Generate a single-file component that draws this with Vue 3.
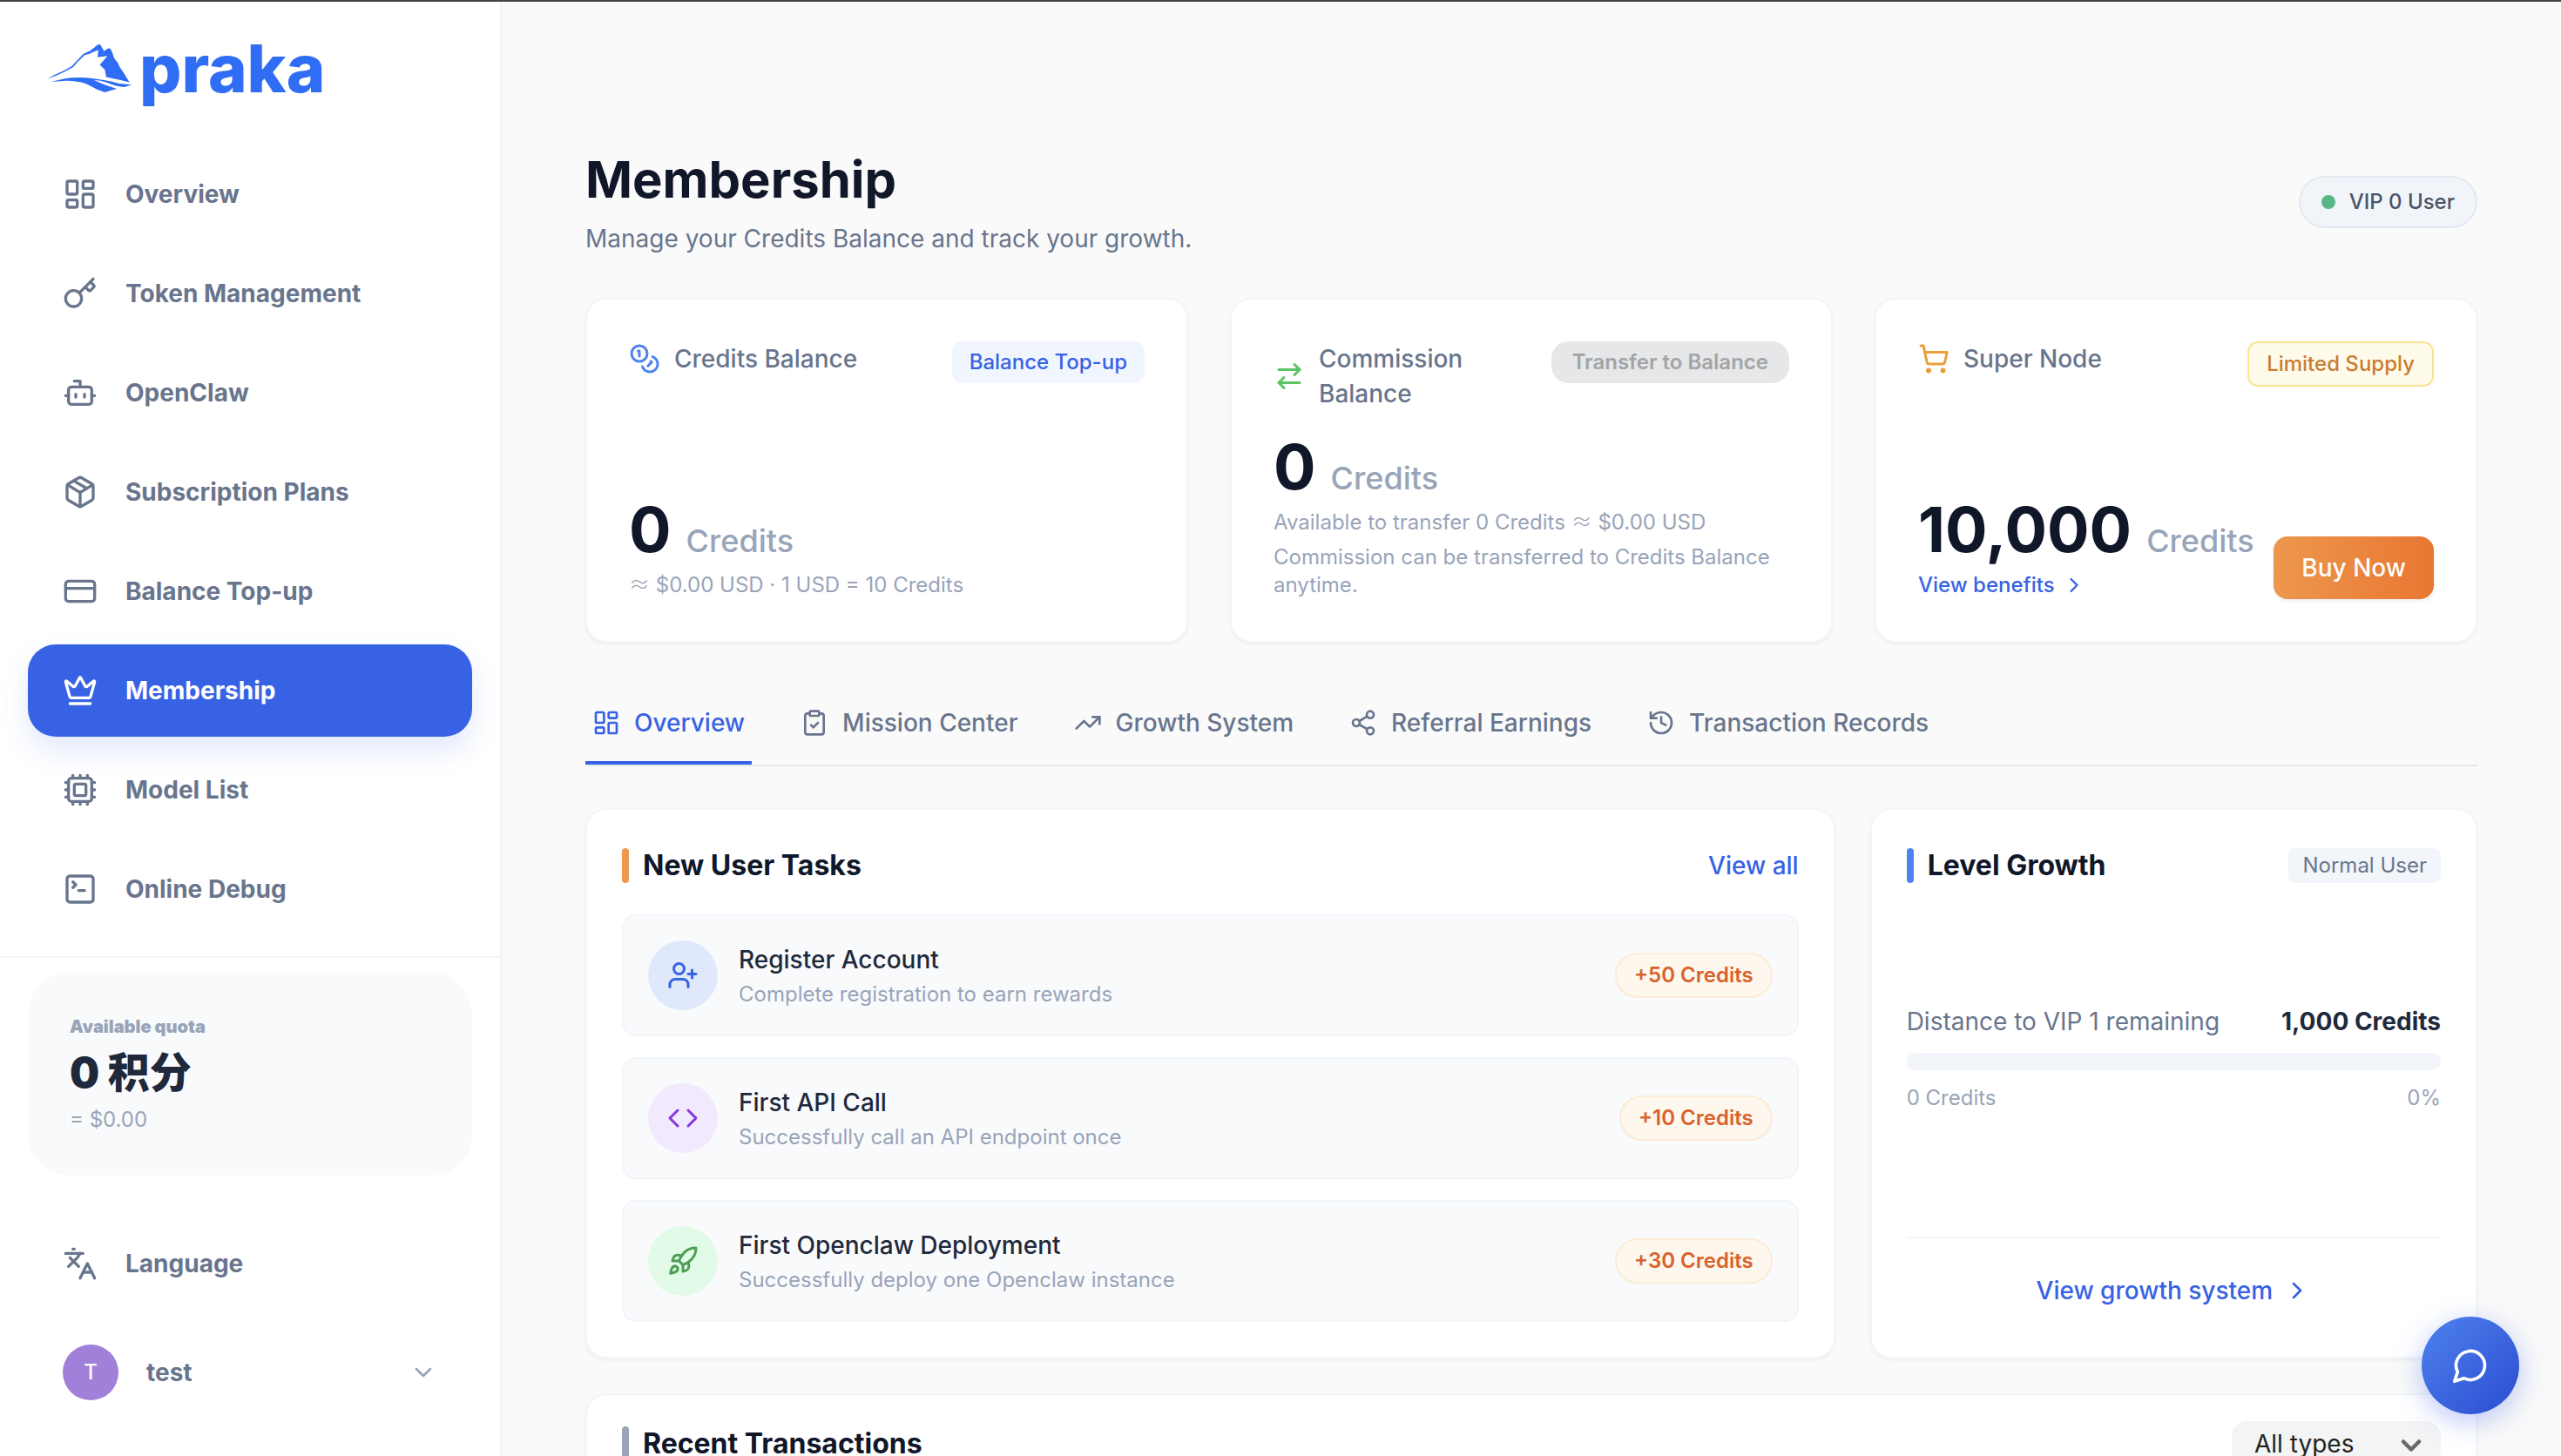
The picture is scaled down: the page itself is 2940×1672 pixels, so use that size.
<template>
  <div class="layout">
    <aside class="sidebar">
      <a class="logo" href="#">
        <svg class="logo-mark" viewBox="45 30 290 170" aria-hidden="true">
          <path
            d="M46 153 L70 139 L100 125 L128 110 L140 97 L168 68 L190 57 L205 46 Q218 34 223 34 Q229 36 232 47 L239 58 L250 50 Q256 46 262 52 L267 64 L273 82 L285 97 L292 112 L308 136 L325 164 L285 154 L246 146 L241 120 L224 105 L238 88 L250 74 L217 79 L219 54 L200 62 L190 67 L173 71 L160 84 L148 96 L134 112 L104 128 L75 142 Z"
          />
          <path
            d="M58 162 L105 151 Q150 144 205 151 Q255 158 290 168 L333 172 L308 180 Q280 178 250 165 Q225 157 203 156 L240 172 L282 186 L241 198 L215 188 L180 170 Q150 159 110 159 Z"
          />
        </svg>
        <span class="logo-text">praka</span>
      </a>

      <nav class="nav">
        <a
          v-for="item in navItems"
          :key="item.label"
          href="#"
          class="nav-item"
          :class="{ active: item.label === 'Membership' }"
        >
          <Icon :name="item.icon" class="icon-40" />
          {{ item.label }}
        </a>
      </nav>

      <div class="sidebar-footer">
        <div class="quota">
          <p class="quota-label">Available quota</p>
          <p class="quota-value">0 积分</p>
          <p class="quota-usd">= $0.00</p>
        </div>
        <button class="nav-item language">
          <Icon name="languages" class="icon-40" />
          Language
        </button>
        <button class="user">
          <span class="avatar">T</span>
          <span class="user-name">test</span>
          <Icon name="chevronDown" class="icon-32" />
        </button>
      </div>
    </aside>

    <main class="main">
      <header class="page-header">
        <div>
          <h1>Membership</h1>
          <p class="subtitle">Manage your Credits Balance and track your growth.</p>
        </div>
        <span class="vip-pill"><i class="dot"></i>VIP 0 User</span>
      </header>

      <section class="balance-cards">
        <article class="card balance-card">
          <div class="balance-head">
            <h2 class="balance-title">
              <Icon name="coins" class="icon-36 blue" />
              Credits Balance
            </h2>
            <button class="tag-button top-up">Balance Top-up</button>
          </div>
          <div>
            <p class="amount">0 <span class="unit">Credits</span></p>
            <p class="note"><span class="approx">≈</span> $0.00 USD · 1 USD = 10 Credits</p>
          </div>
        </article>

        <article class="card balance-card">
          <div class="balance-head">
            <h2 class="balance-title">
              <Icon name="transfer" class="icon-36 green" />
              Commission Balance
            </h2>
            <button class="tag-button transfer" disabled>Transfer to Balance</button>
          </div>
          <div>
            <p class="amount">0 <span class="unit">Credits</span></p>
            <p class="note">Available to transfer 0 Credits <span class="approx">≈</span> $0.00 USD</p>
            <p class="note note-extra">Commission can be transferred to Credits Balance anytime.</p>
          </div>
        </article>

        <article class="card balance-card">
          <div class="balance-head">
            <h2 class="balance-title">
              <Icon name="cart" class="icon-36 amber" />
              Super Node
            </h2>
            <span class="tag-button limited">Limited Supply</span>
          </div>
          <div class="node-bottom">
            <div>
              <p class="amount">10,000 <span class="unit">Credits</span></p>
              <a href="#" class="benefits">View benefits <Icon name="chevronRight" class="icon-28" /></a>
            </div>
            <button class="buy-button">Buy Now</button>
          </div>
        </article>
      </section>

      <div class="tabs" role="tablist">
        <button
          v-for="tab in tabs"
          :key="tab.label"
          class="tab"
          role="tab"
          :class="{ active: tab.label === activeTab }"
          :aria-selected="tab.label === activeTab"
          @click="activeTab = tab.label"
        >
          <Icon :name="tab.icon" class="icon-32" />
          {{ tab.label }}
        </button>
      </div>

      <section class="panels">
        <article class="card panel tasks-panel">
          <div class="panel-head">
            <h3 class="panel-title orange-bar">New User Tasks</h3>
            <a href="#" class="link">View all</a>
          </div>
          <ul class="tasks">
            <li v-for="task in tasks" :key="task.title" class="task">
              <span class="task-icon" :class="task.color"><Icon :name="task.icon" class="icon-36" /></span>
              <div class="task-text">
                <p class="task-title">{{ task.title }}</p>
                <p class="note">{{ task.desc }}</p>
              </div>
              <span class="reward">+{{ task.credits }} Credits</span>
            </li>
          </ul>
        </article>

        <article class="card panel growth-panel">
          <div class="panel-head">
            <h3 class="panel-title blue-bar">Level Growth</h3>
            <span class="level-badge">Normal User</span>
          </div>
          <div class="growth-body">
            <div class="row growth-row">
              <span>Distance to VIP 1 remaining</span>
              <strong>1,000 Credits</strong>
            </div>
            <div class="progress"><div class="progress-fill" :style="{ width: progress + '%' }"></div></div>
            <div class="row note">
              <span>0 Credits</span>
              <span>{{ progress }}%</span>
            </div>
          </div>
          <div class="growth-footer">
            <a href="#" class="link growth-link">View growth system <Icon name="chevronRight" class="icon-32" /></a>
          </div>
        </article>
      </section>

      <section class="card panel transactions">
        <div class="panel-head">
          <h3 class="panel-title slate-bar">Recent Transactions</h3>
          <div class="select-wrap">
            <select aria-label="Transaction type">
              <option>All types</option>
            </select>
            <Icon name="chevronDown" class="select-arrow" />
          </div>
        </div>
      </section>
    </main>

    <button class="chat-button" aria-label="Chat"><Icon name="message" class="icon-44" /></button>
  </div>
</template>

<script setup>
import { h, ref } from 'vue'

const icons = {
  dashboard:
    '<rect width="7" height="9" x="3" y="3" rx="1"/><rect width="7" height="5" x="14" y="3" rx="1"/><rect width="7" height="9" x="14" y="12" rx="1"/><rect width="7" height="5" x="3" y="16" rx="1"/>',
  key: '<path d="m15.5 7.5 2.3 2.3a1 1 0 0 0 1.4 0l2.1-2.1a1 1 0 0 0 0-1.4L19 4"/><path d="m21 2-9.6 9.6"/><circle cx="7.5" cy="15.5" r="5.5"/>',
  bot: '<path d="M12 8V4H8"/><rect width="16" height="12" x="4" y="8" rx="2"/><path d="M2 14h2M20 14h2M15 13v2M9 13v2"/>',
  box: '<path d="M11 21.73a2 2 0 0 0 2 0l7-4A2 2 0 0 0 21 16V8a2 2 0 0 0-1-1.73l-7-4a2 2 0 0 0-2 0l-7 4A2 2 0 0 0 3 8v8a2 2 0 0 0 1 1.73z"/><path d="M12 22V12"/><path d="m3.3 7 7.703 4.734a2 2 0 0 0 1.994 0L20.7 7"/><path d="m7.5 4.27 9 5.15"/>',
  creditCard: '<rect width="20" height="14" x="2" y="5" rx="2"/><path d="M2 10h20"/>',
  crown:
    '<path d="M11.562 3.266a.5.5 0 0 1 .876 0L15.39 8.87a1 1 0 0 0 1.516.294L21.183 5.5a.5.5 0 0 1 .798.519l-2.834 10.246a1 1 0 0 1-.956.734H5.81a1 1 0 0 1-.957-.734L2.02 6.02a.5.5 0 0 1 .798-.519l4.276 3.664a1 1 0 0 0 1.516-.294z"/><path d="M5 21h14"/>',
  cpu: '<path d="M12 20v2M12 2v2M17 20v2M17 2v2M7 20v2M7 2v2M2 12h2M2 17h2M2 7h2M20 12h2M20 17h2M20 7h2"/><rect width="16" height="16" x="4" y="4" rx="2"/><rect width="8" height="8" x="8" y="8" rx="1"/>',
  terminal: '<path d="m7 11 2-2-2-2"/><path d="M11 13h4"/><rect width="18" height="18" x="3" y="3" rx="2"/>',
  languages: '<path d="m5 8 6 6"/><path d="m4 14 6-6 2-3"/><path d="M2 5h12"/><path d="M7 2h1"/><path d="m22 22-5-10-5 10"/><path d="M14 18h6"/>',
  chevronDown: '<path d="m6 9 6 6 6-6"/>',
  chevronRight: '<path d="m9 18 6-6-6-6"/>',
  coins:
    '<circle cx="8" cy="8" r="6"/><path d="M18.09 10.37A6 6 0 1 1 10.34 18"/><path d="M7 6h1v4"/><path d="m16.71 13.88.7.71-2.82 2.82"/>',
  transfer: '<path d="m16 3 4 4-4 4"/><path d="M20 7H4"/><path d="m8 21-4-4 4-4"/><path d="M4 17h16"/>',
  cart: '<circle cx="8" cy="21" r="1"/><circle cx="19" cy="21" r="1"/><path d="M2.05 2.05h2l2.66 12.42a2 2 0 0 0 2 1.58h9.78a2 2 0 0 0 1.95-1.57l1.65-7.43H5.12"/>',
  clipboard:
    '<rect width="8" height="4" x="8" y="2" rx="1"/><path d="M16 4h2a2 2 0 0 1 2 2v14a2 2 0 0 1-2 2H6a2 2 0 0 1-2-2V6a2 2 0 0 1 2-2h2"/><path d="m9 14 2 2 4-4"/>',
  trending: '<path d="M16 7h6v6"/><path d="m22 7-8.5 8.5-5-5L2 17"/>',
  share:
    '<circle cx="18" cy="5" r="3"/><circle cx="6" cy="12" r="3"/><circle cx="18" cy="19" r="3"/><path d="m8.59 13.51 6.83 3.98M15.41 6.51l-6.82 3.98"/>',
  history: '<path d="M3 12a9 9 0 1 0 9-9 9.75 9.75 0 0 0-6.74 2.74L3 8"/><path d="M3 3v5h5"/><path d="M12 7v5l4 2"/>',
  userPlus: '<path d="M16 21v-2a4 4 0 0 0-4-4H6a4 4 0 0 0-4 4v2"/><circle cx="9" cy="7" r="4"/><path d="M19 8v6M22 11h-6"/>',
  code: '<path d="m16 18 6-6-6-6"/><path d="m8 6-6 6 6 6"/>',
  rocket:
    '<path d="M4.5 16.5c-1.5 1.26-2 5-2 5s3.74-.5 5-2c.71-.84.7-2.13-.09-2.91a2.18 2.18 0 0 0-2.91-.09z"/><path d="m12 15-3-3a22 22 0 0 1 2-3.95A12.88 12.88 0 0 1 22 2c0 2.72-.78 7.5-6 11a22.35 22.35 0 0 1-4 2z"/><path d="M9 12H4s.55-3.03 2-4c1.62-1.08 5 0 5 0"/><path d="M12 15v5s3.03-.55 4-2c1.08-1.62 0-5 0-5"/>',
  message: '<path d="M7.9 20A9 9 0 1 0 4 16.1L2 22Z"/>',
}

const Icon = (props) =>
  h('svg', {
    viewBox: '0 0 24 24',
    fill: 'none',
    stroke: 'currentColor',
    'stroke-width': 2,
    'stroke-linecap': 'round',
    'stroke-linejoin': 'round',
    'aria-hidden': 'true',
    innerHTML: icons[props.name],
  })
Icon.props = ['name']

const navItems = [
  { label: 'Overview', icon: 'dashboard' },
  { label: 'Token Management', icon: 'key' },
  { label: 'OpenClaw', icon: 'bot' },
  { label: 'Subscription Plans', icon: 'box' },
  { label: 'Balance Top-up', icon: 'creditCard' },
  { label: 'Membership', icon: 'crown' },
  { label: 'Model List', icon: 'cpu' },
  { label: 'Online Debug', icon: 'terminal' },
]

const tabs = [
  { label: 'Overview', icon: 'dashboard' },
  { label: 'Mission Center', icon: 'clipboard' },
  { label: 'Growth System', icon: 'trending' },
  { label: 'Referral Earnings', icon: 'share' },
  { label: 'Transaction Records', icon: 'history' },
]
const activeTab = ref('Overview')

const tasks = [
  {
    title: 'Register Account',
    desc: 'Complete registration to earn rewards',
    credits: 50,
    icon: 'userPlus',
    color: 'task-blue',
  },
  {
    title: 'First API Call',
    desc: 'Successfully call an API endpoint once',
    credits: 10,
    icon: 'code',
    color: 'task-purple',
  },
  {
    title: 'First Openclaw Deployment',
    desc: 'Successfully deploy one Openclaw instance',
    credits: 30,
    icon: 'rocket',
    color: 'task-green',
  },
]

const progress = ref(0)
</script>

<style>
body {
  margin: 0;
  background: #fafafa;
}
</style>

<style scoped>
.layout {
  display: flex;
  height: 100vh;
  box-sizing: border-box;
  border-top: 2px solid #444;
  overflow: hidden;
  background: #fafafa;
  color: #101729;
  font-family: Inter, 'Noto Sans CJK SC', sans-serif;
  font-size: 28px;
  line-height: 40px;
}

.layout *,
.layout *::before {
  box-sizing: border-box;
}

h1,
h2,
h3,
p,
ul {
  margin: 0;
  padding: 0;
}

a {
  color: inherit;
  text-decoration: none;
}

button {
  margin: 0;
  border: none;
  background: none;
  font: inherit;
  color: inherit;
  cursor: pointer;
}

svg {
  display: block;
  flex-shrink: 0;
}

.icon-28 {
  width: 28px;
  height: 28px;
}

.icon-32 {
  width: 32px;
  height: 32px;
}

.icon-36 {
  width: 36px;
  height: 36px;
}

.icon-40 {
  width: 40px;
  height: 40px;
}

.icon-44 {
  width: 44px;
  height: 44px;
}

.sidebar {
  display: flex;
  flex-direction: column;
  flex-shrink: 0;
  width: 576px;
  border-right: 2px solid #f2f4f8;
  background: #fff;
  box-shadow: 2px 0 6px rgba(15, 23, 42, 0.02);
}

.logo {
  display: flex;
  align-items: center;
  gap: 8px;
  height: 168px;
  padding: 0 54px 16px;
  color: #2f6df4;
}

.logo-mark {
  width: 98px;
  height: 58px;
  fill: currentColor;
}

.logo-text {
  font-size: 76px;
  font-weight: 800;
  line-height: 80px;
}

.nav {
  display: flex;
  flex: 1;
  flex-direction: column;
  gap: 8px;
  padding: 0 32px;
}

.nav-item {
  display: flex;
  align-items: center;
  gap: 32px;
  width: 100%;
  height: 106px;
  padding: 0 40px;
  border-radius: 32px;
  color: #68758d;
  font-weight: 700;
}

.nav-item.active {
  background: #3862e4;
  color: #fff;
  box-shadow: 0 16px 32px rgba(56, 98, 228, 0.14);
}

.sidebar-footer {
  padding: 16px 32px 32px;
  border-top: 2px solid #f1f5f9;
}

.quota {
  margin-bottom: 48px;
  padding: 48px;
  border-radius: 48px;
  background: #f9fafc;
}

.quota-label {
  color: #98a4b8;
  font-size: 20px;
  font-weight: 900;
  line-height: 30px;
}

.quota-value {
  margin: 8px 0;
  color: #1f293b;
  font-size: 48px;
  font-weight: 900;
  line-height: 60px;
}

.quota-usd {
  color: #98a4b8;
  font-size: 24px;
  line-height: 32px;
}

.user {
  display: flex;
  align-items: center;
  gap: 32px;
  width: 100%;
  margin-top: 8px;
  padding: 32px 40px;
  color: #98a4b8;
  text-align: left;
}

.avatar {
  display: flex;
  align-items: center;
  justify-content: center;
  width: 64px;
  height: 64px;
  border-radius: 50%;
  background: #a080d8;
  color: #fff;
  font-size: 24px;
  font-weight: 500;
}

.user-name {
  flex: 1;
  color: #68758d;
  font-weight: 700;
}

.main {
  flex: 1;
  min-width: 0;
  padding: 168px 96px 96px;
  overflow: hidden;
}

.page-header {
  display: flex;
  align-items: center;
  justify-content: space-between;
  margin-bottom: 48px;
}

h1 {
  margin-bottom: 12px;
  font-size: 58px;
  font-weight: 700;
  line-height: 72px;
}

.subtitle {
  color: #68758d;
}

.vip-pill {
  display: flex;
  align-items: center;
  gap: 16px;
  padding: 12px 24px;
  border: 2px solid #e2e8f0;
  border-radius: 30px;
  background: #f1f5f9;
  color: #485468;
  font-size: 24px;
  font-weight: 500;
  line-height: 32px;
}

.dot {
  width: 16px;
  height: 16px;
  border-radius: 50%;
  background: #56b686;
}

.card {
  border: 2px solid #f2f5fa;
  border-radius: 24px;
  background: #fff;
  box-shadow: 0 2px 4px rgba(15, 23, 42, 0.05);
}

.balance-cards {
  display: grid;
  grid-template-columns: repeat(3, 1fr);
  gap: 48px;
}

.balance-card {
  display: flex;
  flex-direction: column;
  justify-content: space-between;
  gap: 24px;
  padding: 48px;
}

.balance-head {
  display: flex;
  align-items: flex-start;
  justify-content: space-between;
  gap: 16px;
}

.balance-title {
  display: flex;
  align-items: center;
  gap: 16px;
  color: #68758d;
  font-size: 28px;
  font-weight: 500;
  line-height: 40px;
}

.blue {
  color: #4f82ee;
}

.green {
  color: #5bc266;
}

.amber {
  color: #e9a03b;
}

.tag-button {
  flex-shrink: 0;
  padding: 8px 20px;
  border-radius: 12px;
  font-size: 24px;
  font-weight: 500;
  line-height: 32px;
}

.top-up {
  background: #f0f5fe;
  color: #3862e4;
}

.transfer {
  padding: 8px 24px;
  border-radius: 20px;
  background: #e6e7e9;
  color: #a3a4a6;
  font-weight: 600;
  cursor: default;
}

.limited {
  border: 2px solid #fae48f;
  background: #fffbeb;
  color: #cb7c30;
}

.amount {
  margin-bottom: 8px;
  font-size: 72px;
  font-weight: 700;
  line-height: 80px;
  white-space: nowrap;
}

.unit {
  color: #98a4b8;
  font-size: 36px;
  font-weight: 500;
  line-height: 40px;
}

.note {
  color: #98a4b8;
  font-size: 24px;
  line-height: 32px;
}

.note-extra {
  margin-top: 8px;
}

.approx {
  font-family: 'Noto Sans CJK SC', sans-serif;
  font-weight: 300;
  line-height: 1;
}

.node-bottom {
  display: flex;
  align-items: flex-end;
  justify-content: space-between;
}

.benefits {
  display: flex;
  align-items: center;
  gap: 8px;
  color: #3862e4;
  font-size: 24px;
  font-weight: 500;
  line-height: 32px;
}

.buy-button {
  padding: 16px 32px;
  border-radius: 16px;
  background: linear-gradient(90deg, #ed974e, #e87732);
  color: #fff;
  font-weight: 500;
  white-space: nowrap;
  box-shadow: 0 2px 4px rgba(15, 23, 42, 0.08);
}

.tabs {
  display: flex;
  gap: 48px;
  margin: 48px 0;
  border-bottom: 2px solid #e2e8ee;
}

.tab {
  display: flex;
  align-items: center;
  gap: 16px;
  padding: 24px 8px;
  border-bottom: 4px solid transparent;
  color: #68758d;
  font-weight: 500;
}

.tab.active {
  border-color: #3862e4;
  color: #3862e4;
}

.panels {
  display: grid;
  grid-template-columns: repeat(12, 1fr);
  gap: 40px;
}

.panel {
  padding: 40px;
}

.tasks-panel {
  grid-column: span 8;
}

.growth-panel {
  display: flex;
  flex-direction: column;
  grid-column: span 4;
}

.panel-head {
  display: flex;
  align-items: center;
  justify-content: space-between;
  height: 48px;
}

.panel-title {
  display: flex;
  align-items: center;
  gap: 16px;
  font-size: 32px;
  font-weight: 700;
}

.panel-title::before {
  content: '';
  width: 8px;
  height: 40px;
  border-radius: 4px;
}

.orange-bar::before {
  background: #ed984f;
}

.blue-bar::before {
  background: #4f82ee;
}

.slate-bar::before {
  background: #98a4b8;
}

.link {
  color: #3862e4;
  font-weight: 500;
}

.tasks {
  display: flex;
  flex-direction: column;
  gap: 24px;
  margin-top: 32px;
  list-style: none;
}

.task {
  display: flex;
  align-items: center;
  gap: 24px;
  padding: 28px;
  border: 2px solid #f1f5f9;
  border-radius: 16px;
  background: #f9fafc;
}

.task-icon {
  display: flex;
  align-items: center;
  justify-content: center;
  width: 80px;
  height: 80px;
  border-radius: 50%;
}

.task-blue {
  background: #dfe9fb;
  color: #3862e4;
}

.task-purple {
  background: #f1e9fd;
  color: #8637e4;
}

.task-green {
  background: #e2fae8;
  color: #4c9f54;
}

.task-text {
  flex: 1;
}

.task-title {
  margin-bottom: 4px;
  color: #1f293b;
  font-weight: 500;
}

.reward {
  padding: 8px 20px;
  border: 2px solid #fcebd5;
  border-radius: 26px;
  background: #fef7ee;
  color: #d8622b;
  font-size: 24px;
  font-weight: 600;
  line-height: 32px;
}

.level-badge {
  padding: 4px 16px;
  border-radius: 8px;
  background: #f2f5f9;
  color: #68758d;
  font-size: 24px;
  line-height: 32px;
}

.growth-body {
  display: flex;
  flex: 1;
  flex-direction: column;
  justify-content: center;
  gap: 16px;
  padding-bottom: 8px;
}

.row {
  display: flex;
  justify-content: space-between;
}

.growth-row {
  color: #68758d;
}

.growth-row strong {
  color: #1f293b;
  font-weight: 700;
}

.progress {
  height: 20px;
  border-radius: 10px;
  background: #f1f5fa;
  overflow: hidden;
}

.progress-fill {
  height: 100%;
  background: #3862e4;
}

.growth-footer {
  padding-top: 24px;
  border-top: 2px solid #f1f5f9;
}

.growth-link {
  display: flex;
  align-items: center;
  justify-content: center;
  gap: 12px;
  padding: 16px;
}

.transactions {
  min-height: 400px;
  margin-top: 40px;
  padding-top: 32px;
}

.select-wrap {
  position: relative;
}

select {
  width: 240px;
  height: 52px;
  padding: 0 26px;
  border: none;
  border-radius: 18px;
  background: #f3f4f4;
  color: #222;
  font: inherit;
  appearance: none;
}

.select-arrow {
  position: absolute;
  top: 10px;
  right: 16px;
  width: 36px;
  height: 36px;
  color: #66686c;
  stroke-width: 3;
  pointer-events: none;
}

.chat-button {
  position: fixed;
  right: 48px;
  bottom: 48px;
  display: flex;
  align-items: center;
  justify-content: center;
  width: 112px;
  height: 112px;
  border-radius: 50%;
  background: linear-gradient(135deg, #4f82ee, #2a4cd0);
  color: #fff;
  box-shadow: 0 8px 32px rgba(56, 98, 228, 0.35);
}
</style>
